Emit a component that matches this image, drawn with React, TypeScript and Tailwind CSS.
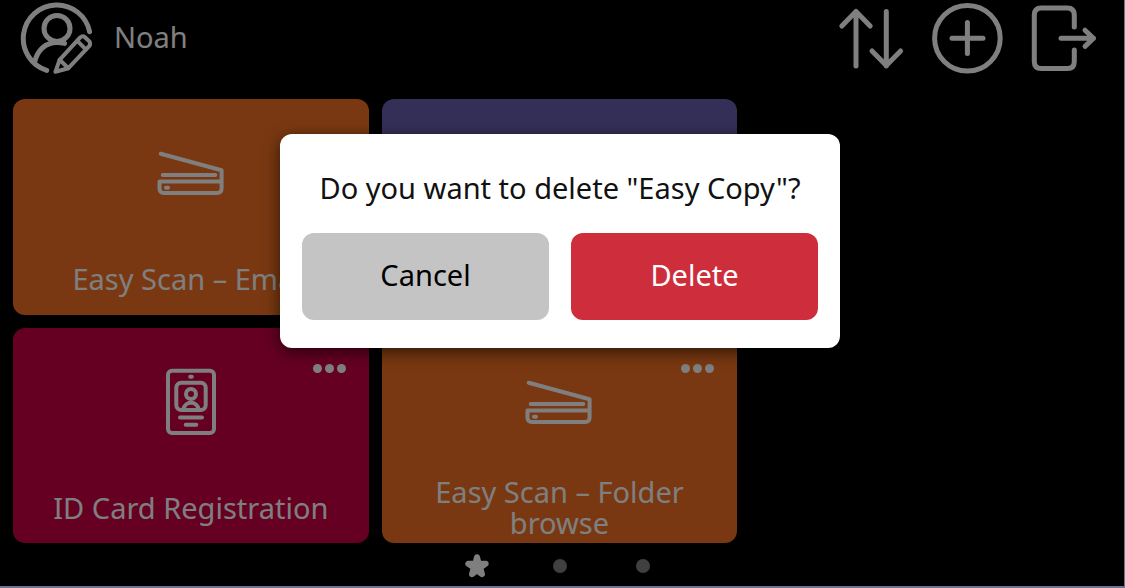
import React from 'react';
import { Copy } from 'lucide-react';

const iconProps = {
  viewBox: '0 0 72 72',
  fill: 'none',
  stroke: 'currentColor',
  strokeLinecap: 'round' as const,
  strokeLinejoin: 'round' as const,
  'aria-hidden': true
};

const UserEditIcon = () => (
  <svg {...iconProps} strokeWidth={5} className="size-[72px]">
    <path d="M69.6 29.7A33.5 33.5 0 1 0 26.7 68.4" />
    <circle cx="37" cy="26.4" r="13" />
    <path d="M14.7 59.5C18 48 25.5 40.8 37 40.6C40 40.6 42.5 40.9 44.5 41.4" />
    <g strokeWidth={4}>
      <path d="M35.4 69.8L39.6 57.8L60.2 35.4Q62.6 33.2 65 35.2L69.2 39.2Q71 41.8 69.2 44.2L48.4 66.2Z" />
      <path d="M57.2 38.8L65.8 47.4M39.6 57.8L48.4 66.2" />
    </g>
  </svg>
);

const SortIcon = () => (
  <svg {...iconProps} strokeWidth={5} className="size-[72px]">
    <path d="M21 64V9.5M6.8 24L21 9.5L35.2 24" />
    <path d="M51.3 9.500V64M37 49L51.3 63.5L65.6 49" />
  </svg>
);

const AddIcon = () => (
  <svg {...iconProps} strokeWidth={5} className="size-[72px]">
    <circle cx="35.4" cy="36.3" r="32.8" />
    <path d="M20 36.3H51M35.4 20.5V51.5" />
  </svg>
);

const LogoutIcon = () => (
  <svg {...iconProps} strokeWidth={5} className="size-[72px]">
    <path d="M45.3 25V13Q45.3 6 38.3 6H12.3Q5.3 6 5.3 13V59.5Q5.3 66.5 12.3 66.5H38.3Q45.3 66.5 45.3 59.5V48" />
    <path d="M32 36.3H64.5M56 28.2L64.5 36.3L56 44.4" />
  </svg>
);

const ScannerIcon = () => (
  <svg {...iconProps} strokeWidth={4} className="size-[72px]">
    <path d="M5.7 15.7L66.6 32.3V50.5Q66.6 55 62.1 55H9Q4.5 55 4.5 50.5V43.6H66.3" />
    <path d="M7.7 37H60.3M11 49.7H13" />
  </svg>
);

const IdCardIcon = () => (
  <svg {...iconProps} strokeWidth={4} className="size-[72px]">
    <rect x="13" y="3.7" width="46" height="62.3" rx="4" />
    <rect x="21.3" y="15.7" width="29.4" height="27.4" rx="5" />
    <circle cx="36" cy="27" r="5" />
    <path d="M28.5 42A7.6 7.6 0 0 1 43.5 42" />
    <path d="M35.2 9.7H36.8M25 50.6H47M30.7 57.7H41.3" />
  </svg>
);

const StarIcon = () => (
  <svg
    viewBox="0 0 24 24"
    fill="currentColor"
    stroke="currentColor"
    strokeWidth={6}
    strokeLinejoin="round"
    className="size-6"
    aria-hidden
  >
    <path d="M12 3.200L13.700 9.700L20.700 9.800L15.200 13.400L17 20.200L12 16.400L7 20.200L8.800 13.400L3.300 9.800L10.300 9.700Z" />
  </svg>
);

const tiles = [
  { label: 'Easy Scan – Email', color: 'bg-[#f27022]', icon: <ScannerIcon /> },
  { label: 'Easy Copy', color: 'bg-[#665eae]', icon: <Copy className="size-[72px]" strokeWidth={1} /> },
  { label: 'ID Card Registration', color: 'bg-[#ca0044]', position: 'col-start-1', icon: <IdCardIcon /> },
  { label: 'Easy Scan – Folder browse', color: 'bg-[#f27022]', icon: <ScannerIcon /> }
];

interface TileProps {
  label: string;
  color: string;
  position?: string;
  icon: React.ReactNode;
}

const Tile: React.FC<TileProps> = ({ label, color, position = '', icon }) => (
  <div className={`relative rounded-xl ${color} ${position}`}>
    <button className="flex h-full w-full flex-col items-center justify-between px-5 pt-[39px] pb-[5px]">
      {icon}
      <span className="flex h-[62px] items-center text-center leading-[31px]">{label}</span>
    </button>
    <button aria-label={`${label} options`} className="absolute top-9 right-[23px] flex gap-[3px]">
      <span className="size-[9px] rounded-full bg-white" />
      <span className="size-[9px] rounded-full bg-white" />
      <span className="size-[9px] rounded-full bg-white" />
    </button>
  </div>
);

const DeleteDialog = () => (
  <div className="absolute inset-0 flex items-center justify-center bg-black/50 pr-1 pb-[104px]">
    <div
      role="dialog"
      aria-modal="true"
      aria-labelledby="delete-title"
      className="w-[560px] rounded-xl bg-white px-[22px] pt-9 pb-7 shadow-[0_4px_16px_rgba(0,0,0,0.6)]"
    >
      <h2 id="delete-title" className="mb-7 text-center leading-[35px] text-[#111111]">
        Do you want to delete "Easy Copy"?
      </h2>
      <div className="grid grid-cols-2 gap-[22px]">
        <button className="h-[87px] rounded-xl bg-[#c4c4c4] pb-1 text-black">Cancel</button>
        <button className="h-[87px] rounded-xl bg-[#ce2d3b] pb-1 text-white">Delete</button>
      </div>
    </div>
  </div>
);

const App: React.FC = () => {
  return (
    <div className="relative flex min-h-screen flex-col border-r border-b-2 border-[#6f7290] bg-black font-['Noto_Sans',sans-serif] text-[29px] text-white">
      {/* Header */}
      <header className="flex items-center justify-between pt-0.5 pr-[23px] pb-[25px] pl-5">
        <button className="flex items-center gap-[22px]">
          <UserEditIcon />
          <span className="pb-0.5 leading-9">Noah</span>
        </button>
        <nav className="flex gap-[25px]">
          <button aria-label="Sort">
            <SortIcon />
          </button>
          <button aria-label="Add">
            <AddIcon />
          </button>
          <button aria-label="Log out">
            <LogoutIcon />
          </button>
        </nav>
      </header>

      {/* Tiles */}
      <main className="grid flex-1 grid-cols-3 grid-rows-2 gap-[13px] pr-[18px] pl-[13px]">
        {tiles.map((tile) => (
          <Tile key={tile.label} {...tile} />
        ))}
      </main>

      {/* Page indicator */}
      <footer className="flex h-[43px] items-center justify-center gap-[59px] pt-0.5 pr-1">
        <button aria-label="Favorites">
          <StarIcon />
        </button>
        <button aria-label="Page 2" className="flex size-6 items-center justify-center">
          <span className="size-3.5 rounded-full bg-[#808080]" />
        </button>
        <button aria-label="Page 3" className="flex size-6 items-center justify-center">
          <span className="size-3.5 rounded-full bg-[#808080]" />
        </button>
      </footer>

      <DeleteDialog />
    </div>
  );
};

export default App;
